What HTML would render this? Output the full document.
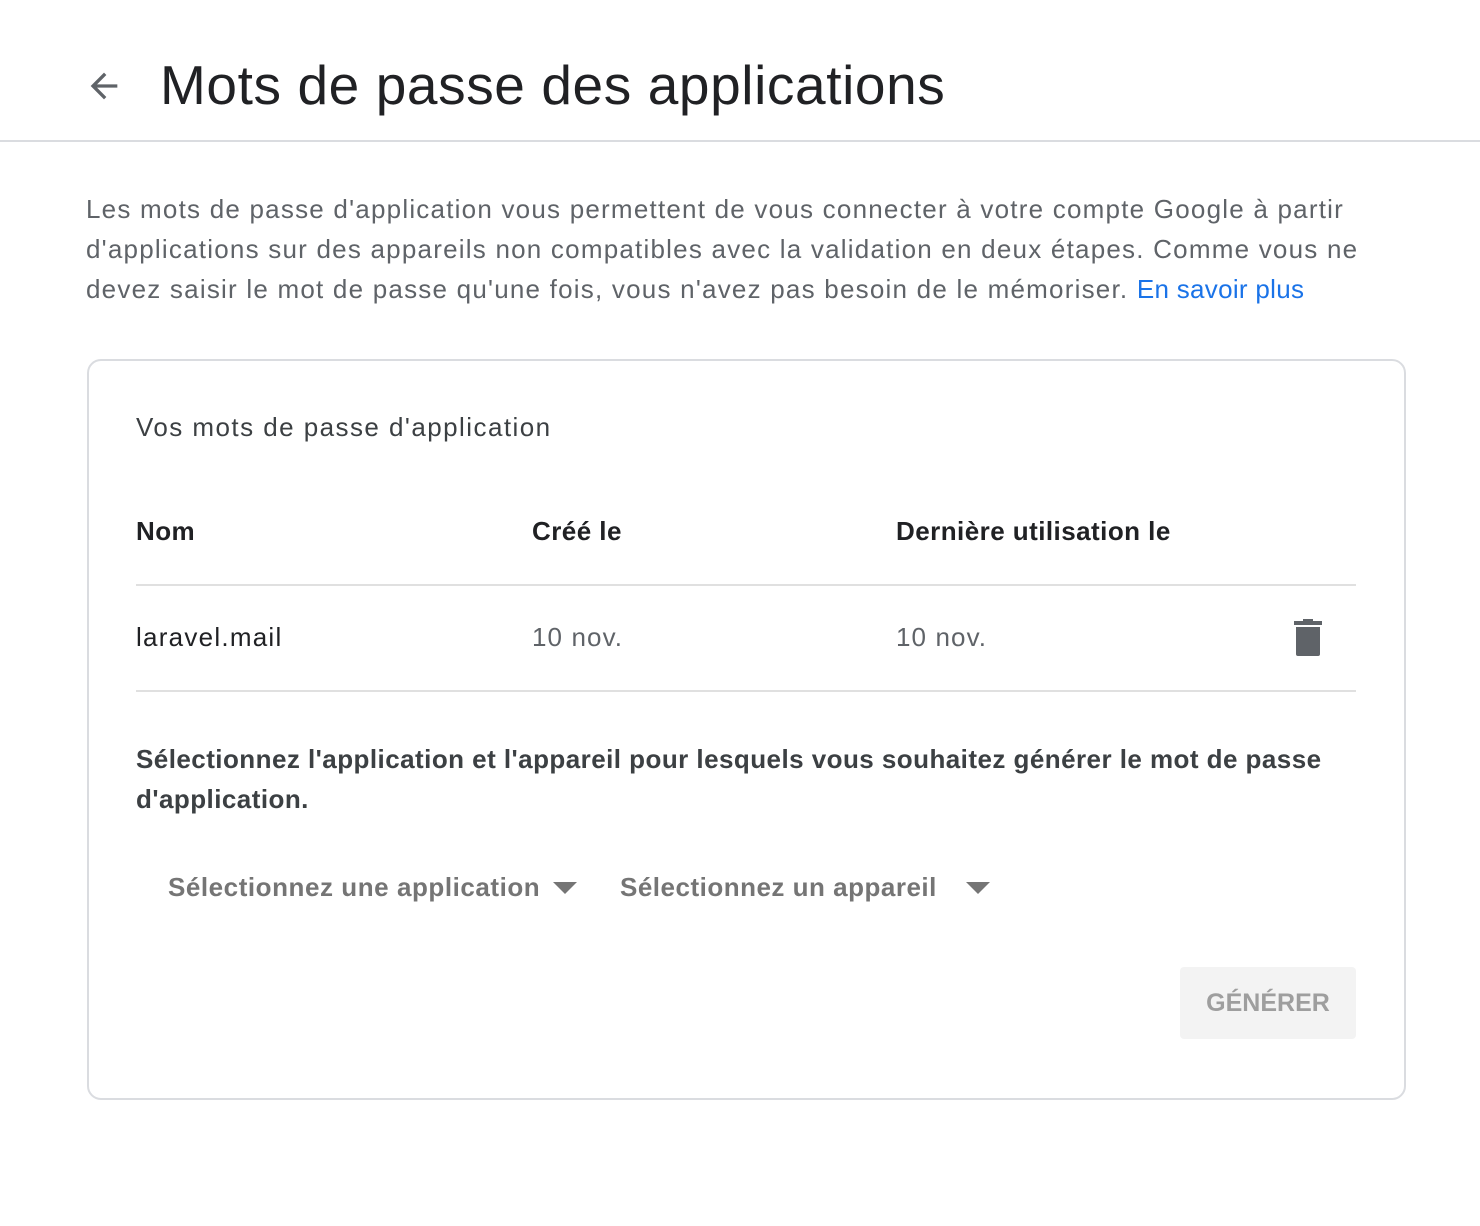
<!DOCTYPE html>
<html><head><meta charset="utf-8"><style>
*{margin:0;padding:0;box-sizing:border-box}
body{width:1480px;height:1226px;background:#fff;font-family:"Liberation Sans",Arial,sans-serif;position:relative;overflow:hidden;color:#202124}
.a{position:absolute;white-space:nowrap}
</style></head><body>
<svg class="a" style="left:84px;top:66px" width="40" height="40" viewBox="0 0 24 24"><path d="M20 11H7.83l5.59-5.59L12 4l-8 8 8 8 1.41-1.41L7.83 13H20v-2z" fill="#5f6368"/></svg>
<div class="a" style="left:160px;top:53px;font-size:55px;color:#202124;letter-spacing:0.6px">Mots de passe des applications</div>
<div class="a" style="left:0;top:140px;width:1480px;height:2px;background:#dadce0"></div>
<div class="a" style="left:86px;top:189px;font-size:26px;line-height:40px;color:#5f6368;letter-spacing:1.22px">Les mots de passe d'application vous permettent de vous connecter à votre compte Google à partir<br>d'applications sur des appareils non compatibles avec la validation en deux étapes. Comme vous ne<br>devez saisir le mot de passe qu'une fois, vous n'avez pas besoin de le mémoriser. <span style="color:#1a73e8;letter-spacing:0.3px">En savoir plus</span></div>
<div class="a" style="left:87px;top:359px;width:1319px;height:741px;border:2px solid #dadce0;border-radius:14px"></div>
<div class="a" style="left:136px;top:412px;font-size:26px;color:#3c4043;letter-spacing:1.45px">Vos mots de passe d'application</div>
<div class="a" style="left:136px;top:516px;font-size:26px;font-weight:bold;color:#202124;letter-spacing:0.45px">Nom</div>
<div class="a" style="left:532px;top:516px;font-size:26px;font-weight:bold;color:#202124;letter-spacing:0.45px">Créé le</div>
<div class="a" style="left:896px;top:516px;font-size:26px;font-weight:bold;color:#202124;letter-spacing:0.45px">Dernière utilisation le</div>
<div class="a" style="left:136px;top:584px;width:1220px;height:2px;background:#e0e0e0"></div>
<div class="a" style="left:136px;top:622px;font-size:26px;color:#202124;letter-spacing:1.25px">laravel.mail</div>
<div class="a" style="left:532px;top:622px;font-size:26px;color:#5f6368;letter-spacing:1.1px">10 nov.</div>
<div class="a" style="left:896px;top:622px;font-size:26px;color:#5f6368;letter-spacing:1.1px">10 nov.</div>
<svg class="a" style="left:1293px;top:619px" width="30" height="38" viewBox="0 0 30 38"><rect x="1" y="2" width="28" height="4" fill="#5f6368"/><rect x="10" y="0" width="10" height="3" fill="#5f6368"/><path d="M3 8h24v27a2 2 0 0 1-2 2H5a2 2 0 0 1-2-2z" fill="#5f6368"/></svg>
<div class="a" style="left:136px;top:690px;width:1220px;height:2px;background:#e0e0e0"></div>
<div class="a" style="left:136px;top:739px;font-size:26px;line-height:40px;font-weight:bold;color:#3c4043;letter-spacing:0.45px">Sélectionnez l'application et l'appareil pour lesquels vous souhaitez générer le mot de passe<br>d'application.</div>
<div class="a" style="left:168px;top:872px;font-size:26px;font-weight:bold;color:#757575;letter-spacing:0.55px">Sélectionnez une application</div>
<svg class="a" style="left:553px;top:882px" width="24" height="12"><path d="M0 0h24L12 12z" fill="#757575"/></svg>
<div class="a" style="left:620px;top:872px;font-size:26px;font-weight:bold;color:#757575;letter-spacing:0.5px">Sélectionnez un appareil</div>
<svg class="a" style="left:966px;top:882px" width="24" height="12"><path d="M0 0h24L12 12z" fill="#757575"/></svg>
<div class="a" style="left:1180px;top:967px;width:176px;height:72px;background:#f3f3f3;border-radius:4px;font-size:25px;font-weight:bold;color:#9e9e9e;text-align:center;line-height:72px">GÉNÉRER</div>
</body></html>
